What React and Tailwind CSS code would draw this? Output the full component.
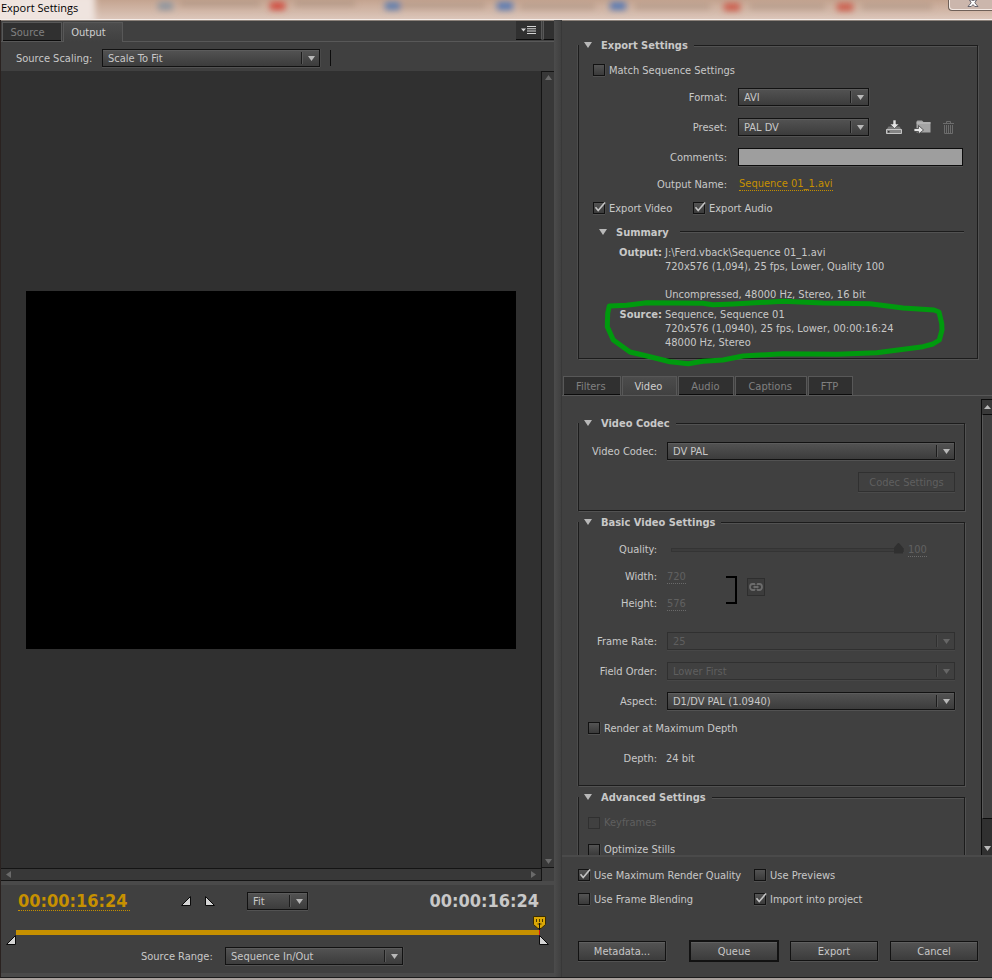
import React, { useState } from "react";
import clsx from "clsx";

/* ---------- small building blocks ---------- */

const Triangle = ({ className, size = "h-[6px] w-2" }) => (
  <svg viewBox="0 0 9 7" preserveAspectRatio="none" className={clsx(size, className)} fill="currentColor" aria-hidden="true">
    <path d="M0 0h9L4.500 7z" />
  </svg>
);

const Select = ({ id, value, options = [], disabled, className, label }) => (
  <div className={clsx("relative h-[18px]", className)}>
    <select
      id={id}
      aria-label={label}
      defaultValue={value}
      disabled={disabled}
      className={clsx(
        "block h-full w-full appearance-none border pl-[5px] pr-5 pt-px text-[11px] leading-4 outline-none",
        disabled
          ? "border-[#303030] bg-[#404040] text-[#5f5f5f] opacity-100 shadow-[0_1px_0_#474747]"
          : "border-[#121212] bg-linear-to-b from-[#535353] to-[#3c3c3c] text-[#c8c8c8] shadow-[0_1px_0_#525252,1px_0_0_#4a4a4a,inset_0_1px_0_#5c5c5c]"
      )}
    >
      {[value, ...options].map((o) => (
        <option key={o}>{o}</option>
      ))}
    </select>
    <span
      className={clsx(
        "pointer-events-none absolute inset-y-[3px] right-[17px] w-[2px] border-l",
        disabled ? "border-[#303030] bg-[#4a4a4a]" : "border-[#1c1c1c] bg-[#595959]"
      )}
    />
    <Triangle
      size="h-[5px] w-[7px]"
      className={clsx(
        "pointer-events-none absolute right-[5px] top-[7px]",
        disabled ? "text-[#666]" : "text-[#b8b8b8]"
      )}
    />
  </div>
);

const Checkbox = ({ label, checked = false, disabled, className }) => (
  <label className={clsx("flex items-center gap-1", disabled ? "text-[#5f5f5f]" : "text-[#c8c8c8]", className)}>
    <span className="relative block size-3">
      <input
        type="checkbox"
        defaultChecked={checked}
        disabled={disabled}
        className={clsx(
          "peer block size-3 appearance-none border",
          disabled
            ? "border-[#303030] bg-[#404040]"
            : "border-[#121212] bg-linear-to-b from-[#545454] to-[#3a3a3a] shadow-[0_1px_0_#505050,1px_0_0_#4a4a4a]"
        )}
      />
      <svg
        viewBox="0 0 12 12"
        className="pointer-events-none absolute inset-0 hidden size-3 overflow-visible peer-checked:block"
        fill="none"
        stroke="#c4c4c4"
        strokeWidth="1.600"
        aria-hidden="true"
      >
        <path d="M2.500 5.200 5.200 8.600 12 0.500" />
      </svg>
    </span>
    {label}
  </label>
);

const Group = ({ title, className, children }) => (
  <fieldset
    className={clsx(
      "min-w-0 border border-[#1c1c1c] shadow-[1px_1px_0_#525252,-1px_0_0_#4c4c4c,inset_0_1px_0_#525252]",
      className
    )}
  >
    <legend className="flex h-4 items-center gap-[9px] bg-[#404040] pl-[5px] pr-[6px] font-bold text-[#c8c8c8]">
      <Triangle className="text-[#b8b8b8]" />
      {title}
    </legend>
    {children}
  </fieldset>
);

const Row = ({ label, htmlFor, labelWidth = "w-[78px]", height = "h-[30px]", gap = "gap-[10px]", children }) => (
  <div className={clsx("flex items-center", gap, height)}>
    <label htmlFor={htmlFor} className={clsx("shrink-0 text-right text-[#c8c8c8]", labelWidth)}>
      {label}
    </label>
    {children}
  </div>
);

const Tabs = ({ items, initial, className, tabClass }) => {
  const [active, setActive] = useState(initial);
  return (
    <div role="tablist" className={clsx("flex items-end gap-px", className)}>
      {items.map((t) => (
        <button
          key={t}
          type="button"
          role="tab"
          aria-selected={t === active}
          onClick={() => setActive(t)}
          className={clsx(
            "border border-b-0 border-[#585858]",
            tabClass,
            t === active
              ? "h-5 bg-linear-to-b from-[#4c4c4c] to-[#404040] pb-px text-[#d0d0d0]"
              : "mb-px h-[19px] bg-[#303030] text-[#808080] shadow-[inset_0_-1px_0_#0c0c0c]"
          )}
        >
          {t}
        </button>
      ))}
    </div>
  );
};

const PushButton = ({ children, className, strong, disabled }) => (
  <button
    type="button"
    disabled={disabled}
    className={clsx(
      "h-5",
      disabled
        ? "border border-[#303030] text-[#5f5f5f] shadow-[0_1px_0_#4a4a4a]"
        : "bg-linear-to-b from-[#545454] to-[#3c3c3c] text-[#c8c8c8]",
      !disabled &&
        (strong
          ? "border border-[#121212] shadow-[inset_0_1px_0_#606060] ring-1 ring-[#121212]"
          : "border border-[#121212] shadow-[0_1px_0_#525252,1px_0_0_#4a4a4a,inset_0_1px_0_#606060]"),
      className
    )}
  >
    {children}
  </button>
);

const HotNumber = ({ id, value, label }) => (
  <input
    id={id}
    aria-label={label}
    defaultValue={value}
    disabled
    className="h-[14px] w-[19px] border-b border-dotted border-[#6a6a6a] bg-transparent p-0 text-[#606060]"
  />
);

/* ---------- window frame ---------- */

const TitleBar = () => (
  <header className="relative flex h-5 shrink-0 overflow-hidden border-b border-[#f4ece8] bg-linear-to-b from-[#c4a490] to-[#dcc6ba]">
    <svg className="absolute inset-0 h-full w-full" aria-hidden="true">
      <defs>
        <filter id="soft" x="-50%" y="-100%" width="200%" height="300%">
          <feGaussianBlur stdDeviation="3" />
        </filter>
      </defs>
      <g filter="url(#soft)">
        <rect x="-10" y="-6" width="105" height="30" fill="#efe4df" />
        <rect x="180" y="1" width="80" height="5" fill="#9c8374" opacity=".5" />
        <rect x="295" y="1" width="60" height="5" fill="#9c8374" opacity=".5" />
        <rect x="400" y="3" width="85" height="5" fill="#9c8374" opacity=".5" />
        <rect x="520" y="4" width="75" height="5" fill="#9c8374" opacity=".5" />
        <rect x="635" y="4" width="75" height="5" fill="#9c8374" opacity=".5" />
        <rect x="750" y="4" width="75" height="5" fill="#9c8374" opacity=".5" />
        <rect x="862" y="4" width="70" height="5" fill="#9c8374" opacity=".5" />
        <rect x="158" y="2" width="15" height="8" fill="#8c949f" />
        <rect x="270" y="2" width="15" height="8" fill="#d24a3c" />
        <rect x="385" y="2" width="15" height="8" fill="#5c7cae" />
        <rect x="497" y="2" width="16" height="8" fill="#5578b4" />
        <rect x="610" y="2" width="16" height="8" fill="#5578b4" />
        <rect x="724" y="3" width="16" height="8" fill="#cc5c4c" />
        <rect x="837" y="3" width="16" height="8" fill="#cc5c4c" />
      </g>
    </svg>
    <h1 className="relative flex-1 pl-px font-['Open_Sans',sans-serif] text-[11px] leading-[15px] text-black">
      Export Settings
    </h1>
    <button
      type="button"
      aria-label="Close"
      className="relative -mt-px flex h-3 w-[44px] items-start rounded-bl-[4px] border border-r-0 border-[#6f6058] bg-[#cbb6ac] pl-[18px] shadow-[inset_1px_-1px_0_#f2e8e3]"
    >
      <svg viewBox="0 0 12 7" className="h-[7px] w-3" aria-hidden="true">
        <path
          d="M2.500 0h2.500l1 .8L7 0h2.500L7.800 2.800 11 6.500H7.800L6 4.600 4.200 6.500H1L4.200 2.800z"
          fill="#fff"
          stroke="#4a4a55"
          strokeWidth=".8"
        />
      </svg>
    </button>
  </header>
);

/* ---------- left side ---------- */

const PreviewPane = () => (
  <div className="flex min-h-0 flex-1 flex-col">
    <div className="flex h-[21px] shrink-0 items-end border-b border-[#585858]">
      <Tabs items={["Source", "Output"]} initial="Output" className="-mb-px flex-1 pl-px" tabClass="w-[60px] pr-[9px]" />
      <button
        type="button"
        aria-label="Panel menu"
        className="flex h-[19px] w-[26px] items-center justify-center self-start border-b border-r border-b-[#0c0c0c] border-r-[#585858] bg-[#303030]"
      >
        <svg viewBox="0 0 15 8" className="h-2 w-[15px]" fill="#d4d4d4" aria-hidden="true">
          <path d="M0 2.500h5L2.500 5.500zM6 0h9v1H6zM6 2.300h9v1H6zM6 4.600h9v1H6zM6 7h9v1H6z" />
        </svg>
      </button>
      <span className="ml-px h-[19px] w-[11px] self-start border-b border-l border-b-[#0c0c0c] border-l-[#585858] bg-[#303030]" />
    </div>

    <div className="flex h-[29px] shrink-0 items-center pl-[15px] pt-[3px]">
      <label htmlFor="scaling" className="w-[86px]">
        Source Scaling:
      </label>
      <Select id="scaling" value="Scale To Fit" options={["Scale To Fill", "Stretch To Fill"]} className="w-[218px]" />
      <span className="ml-[10px] h-4 w-px bg-[#0c0c0c]" />
    </div>

    <div className="flex min-h-0 flex-1 bg-[#303030]">
      <div className="flex flex-1 items-center justify-center">
        <div className="aspect-[490/358] w-[calc(100%-50px)] bg-black" />
      </div>
      <div className="flex w-[13px] flex-col items-center justify-between border border-r-0 border-[#141414] bg-[#383838] py-[3px] text-[#6a6a6a]">
        <Triangle size="h-[5px] w-[7px]" className="rotate-180" />
        <Triangle size="h-[5px] w-[7px]" />
      </div>
    </div>
    <div className="flex h-[13px] shrink-0">
      <div className="flex flex-1 items-center justify-between border border-l-0 border-[#141414] bg-[#383838] px-1 text-[#6a6a6a]">
        <Triangle size="h-[5px] w-[7px]" className="rotate-90" />
        <Triangle size="h-[5px] w-[7px]" className="-rotate-90" />
      </div>
      <div className="w-3 bg-[#404040]" />
    </div>
  </div>
);

const MarkIn = () => (
  <svg viewBox="0 0 10 10" className="size-[10px]" aria-hidden="true">
    <path d="M9.500 0.500v9H0.500z" fill="#d4d4d4" stroke="#0a0a0a" />
  </svg>
);

const MarkOut = () => (
  <svg viewBox="0 0 10 10" className="size-[10px]" aria-hidden="true">
    <path d="M0.500 0.500v9h9z" fill="#d4d4d4" stroke="#0a0a0a" />
  </svg>
);

const Transport = () => (
  <div className="shrink-0 border-t-4 border-[#4a4a4a]">
    <div className="flex h-8 items-center pl-[17px] pr-[15px]">
      <input
        aria-label="Current time"
        defaultValue="00:00:16:24"
        className="h-[19px] w-28 border-b border-dotted border-[#c69000] bg-transparent p-0 text-[18px] font-bold leading-[18px] text-[#c69000] outline-none"
      />
      <button type="button" aria-label="Set in point" className="ml-[51px]">
        <MarkIn />
      </button>
      <button type="button" aria-label="Set out point" className="ml-[14px]">
        <MarkOut />
      </button>
      <Select label="Zoom" value="Fit" options={["50%", "100%"]} className="ml-8 w-[61px]" />
      <output className="ml-auto text-[18px] font-bold leading-[18px] text-[#c8c8c8]">00:00:16:24</output>
    </div>

    <div className="relative ml-[15px] mr-[14px] mt-[13px] h-[5px] bg-[#c69000]">
      <svg viewBox="0 0 13 21" className="absolute -right-[6px] -top-[15px] h-[21px] w-[13px]" aria-hidden="true">
        <path d="M0.500 1.500h12v8L8 13.500H5L0.500 9.500z" fill="#dca806" stroke="#3a2c00" />
        <path d="M3.500 4v3M6.500 4v3M9.500 4v3M4.500 9h4" stroke="#4a3800" />
        <path d="M6.500 8v7" stroke="#111" />
        <path d="M6.500 15v5" stroke="#d81414" />
      </svg>
    </div>
    <div className="flex justify-between px-[5px]">
      <MarkIn />
      <MarkOut />
    </div>

    <div className="flex h-[22px] items-center pl-[140px]">
      <label htmlFor="range" className="w-[84px]">
        Source Range:
      </label>
      <Select id="range" value="Sequence In/Out" options={["Work Area", "Entire Sequence"]} className="w-[178px]" />
    </div>
    <div className="mt-[6px] h-1 bg-[#4a4a4a]" />
  </div>
);

/* ---------- right side ---------- */

const PresetIcons = () => (
  <div className="flex items-center gap-3 pl-[6px]">
    <button type="button" aria-label="Save preset">
      <svg viewBox="0 0 16 14" className="h-[14px] w-4" aria-hidden="true">
        <path d="M2.500 6.500h11l2 3v4H0.500v-4z" fill="#787878" />
        <path d="M0.500 9.500h15v4H0.500z" fill="#858585" stroke="#c4c4c4" />
        <path d="M2 11h1.500v1.500H2z" fill="#303030" />
        <path d="M7 0h3v4h3L8.500 8.500 4 4h3z" fill="#e2e2e2" stroke="#404040" strokeWidth=".6" />
      </svg>
    </button>
    <button type="button" aria-label="Import preset">
      <svg viewBox="0 0 17 14" className="h-[14px] w-[17px]" aria-hidden="true">
        <path d="M2.500 1.500 3.500 0.500h4.500l1.500 1.500H16.500V12.500H2.500z" fill="#a4a4a4" />
        <path d="M2.500 3h14" stroke="#c0c0c0" />
        <path d="M0 8.500h4.500V5.500L9.500 10l-5 4v-2.500H0z" fill="#e6e6e6" stroke="#404040" strokeWidth=".8" />
      </svg>
    </button>
    <button type="button" aria-label="Delete preset" disabled>
      <svg viewBox="0 0 11 13" className="h-[13px] w-[11px]" fill="none" stroke="#6c6c6c" aria-hidden="true">
        <path d="M0 2.500h11M3.500 2V0.500h4V2M1.500 4v8.500h8V4M3.500 4v8M5.500 4v8M7.500 4v8" />
      </svg>
    </button>
  </div>
);

const ExportSettings = () => (
  <Group title="Export Settings" className="ml-4 mr-[14px] mt-4 pb-2">
    <Checkbox label="Match Sequence Settings" className="mt-[7px] h-5 pl-[14px]" />

    <div className="mt-[2px] pr-[14px]">
      <Row label="Format:" htmlFor="format" labelWidth="w-[148px]" gap="gap-[11px]">
        <Select id="format" value="AVI" options={["H.264", "QuickTime"]} className="w-[131px]" />
      </Row>
      <Row label="Preset:" htmlFor="preset" labelWidth="w-[148px]" gap="gap-[11px]">
        <Select id="preset" value="PAL DV" options={["NTSC DV"]} className="w-[131px]" />
        <PresetIcons />
      </Row>
      <Row label="Comments:" htmlFor="comments" labelWidth="w-[148px]" gap="gap-[11px]">
        <input
          id="comments"
          type="text"
          className="h-[18px] min-w-0 flex-1 border border-[#0c0c0c] bg-[#9e9e9e] px-1 text-black shadow-[0_1px_0_#525252] outline-none"
        />
      </Row>
      <div className="flex h-6 items-center gap-3">
        <span className="w-[148px] text-right">Output Name:</span>
        <a href="#output" className="h-[14px] border-b border-dotted border-[#c69000] leading-[14px] text-[#c69000]">
          Sequence 01_1.avi
        </a>
      </div>
    </div>

    <div className="flex h-6 items-center pl-[14px]">
      <Checkbox label="Export Video" checked className="w-[100px]" />
      <Checkbox label="Export Audio" checked />
    </div>

    <div className="flex h-6 items-center pl-5 pr-[13px] font-bold">
      <Triangle className="mr-[9px] text-[#b8b8b8]" />
      <h2>Summary</h2>
      <span className="ml-[11px] h-[2px] flex-1 border-t border-[#1c1c1c] bg-[#525252]" />
    </div>

    <dl className="mt-[2px] leading-[14px]">
      <div className="flex gap-[3px]">
        <dt className="w-[83px] text-right font-bold">Output:</dt>
        <dd>
          J:\Ferd.vback\Sequence 01_1.avi
          <br />
          720x576 (1,094), 25 fps, Lower, Quality 100
          <br />
          <br />
          Uncompressed, 48000 Hz, Stereo, 16 bit
        </dd>
      </div>
      <div className="relative mt-[6px] flex gap-[3px]">
        <dt className="w-[83px] text-right font-bold">Source:</dt>
        <dd>
          Sequence, Sequence 01
          <br />
          720x576 (1,0940), 25 fps, Lower, 00:00:16:24
          <br />
          48000 Hz, Stereo
        </dd>
        {/* marker drawn round the source block */}
        <svg
          viewBox="0 0 345 70"
          className="pointer-events-none absolute -top-[10px] left-[25px] h-[70px] w-[345px]"
          fill="none"
          stroke="#009a0e"
          strokeWidth="5"
          strokeLinecap="round"
          strokeLinejoin="round"
          aria-hidden="true"
        >
          <path d="M5.300 8 22.700 7.300 42.700 4.700 99 5.300 109 6.700 129 6 179 3.300 219 5 266 5.700 299 10 330 12 335 14 337.700 25.300 338 32 335.300 42 329 46 319 48.700 272.700 54.700 232.700 56.300 179 55.700 139 58 119 62 99 63.300 84.300 65.700 66 63.700 46 58.700 26 54 9.300 42 3.300 28.700 3.700 15.300z" />
        </svg>
      </div>
    </dl>
  </Group>
);

const VideoSettings = () => (
  <div className="flex min-h-0 flex-1 overflow-hidden border-t border-[#585858]">
    <div className="min-w-0 flex-1 pl-4 pr-4 pt-[19px]">
      <Group title="Video Codec" className="pb-3">
        <div className="pr-[9px] pt-[5px]">
          <Row label="Video Codec:" htmlFor="codec">
            <Select id="codec" value="DV PAL" options={["DV NTSC"]} className="flex-1" />
          </Row>
          <div className="flex h-8 items-center justify-end">
            <PushButton disabled className="w-[97px]">
              Codec Settings
            </PushButton>
          </div>
        </div>
      </Group>

      <Group title="Basic Video Settings" className="mt-[3px] pb-[15px]">
        <div className="pr-[9px] pt-[6px]">
          <Row label="Quality:" htmlFor="quality" height="h-[27px]">
            <div className="flex flex-1 items-center gap-1 pl-1 pr-7">
              <input
                id="quality"
                type="range"
                defaultValue={100}
                disabled
                className="h-[11px] min-w-0 flex-1 appearance-none bg-transparent [&::-webkit-slider-runnable-track]:h-1 [&::-webkit-slider-runnable-track]:border [&::-webkit-slider-runnable-track]:border-[#343434] [&::-webkit-slider-runnable-track]:bg-[#3c3c3c] [&::-webkit-slider-thumb]:-mt-[6px] [&::-webkit-slider-thumb]:h-[11px] [&::-webkit-slider-thumb]:w-[9px] [&::-webkit-slider-thumb]:appearance-none [&::-webkit-slider-thumb]:bg-[#303030] [&::-webkit-slider-thumb]:[clip-path:polygon(50%_0,100%_45%,100%_100%,0_100%,0_45%)]"
              />
              <HotNumber value="100" label="Quality value" />
            </div>
          </Row>
          <div className="flex">
            <div className="w-[147px]">
              <Row label="Width:" htmlFor="width" height="h-[27px]">
                <HotNumber id="width" value="720" />
              </Row>
              <Row label="Height:" htmlFor="height" height="h-[27px]">
                <HotNumber id="height" value="576" />
              </Row>
            </div>
            <div className="flex items-center gap-[10px]">
              <span className="h-7 w-[11px] border-2 border-l-0 border-black" />
              <button
                type="button"
                aria-label="Link width and height"
                disabled
                className="mb-[6px] flex size-[18px] items-center justify-center border border-[#2e2e2e] bg-[#3c3c3c]"
              >
                <svg viewBox="0 0 14 8" className="h-2 w-[14px] shrink-0" fill="none" stroke="#6c6c6c" strokeWidth="1.800" aria-hidden="true">
                  <path d="M6 2 5.200 1H3.500a2.500 3 0 0 0 0 6H5.200L6 6M8 2l.8-1h1.700a2.500 3 0 0 1 0 6H8.800L8 6M4.500 4h5" />
                </svg>
              </button>
            </div>
          </div>
          <div className="pt-[9px]">
            <Row label="Frame Rate:" htmlFor="rate">
              <Select id="rate" value="25" disabled className="flex-1" />
            </Row>
            <Row label="Field Order:" htmlFor="order">
              <Select id="order" value="Lower First" disabled className="flex-1" />
            </Row>
            <Row label="Aspect:" htmlFor="aspect">
              <Select id="aspect" value="D1/DV PAL (1.0940)" options={["Square Pixels (1.0)"]} className="flex-1" />
            </Row>
          </div>
        </div>
        <Checkbox label="Render at Maximum Depth" className="h-6 pl-[9px]" />
        <div className="mt-[6px] flex h-6 items-center gap-[9px]">
          <span className="w-[78px] text-right">Depth:</span>
          <span>24 bit</span>
        </div>
      </Group>

      <Group title="Advanced Settings" className="mt-[3px] pb-4">
        <div className="pl-[9px] pt-1">
          <Checkbox label="Keyframes" disabled className="h-[27px]" />
          <Checkbox label="Optimize Stills" className="h-[27px]" />
        </div>
      </Group>
    </div>

    {/* scroll bar */}
    <div className="mt-[3px] flex w-[11px] shrink-0 flex-col border-l border-[#0c0c0c] bg-[#303030] text-[#b8b8b8]">
      <div className="flex h-[15px] items-center justify-center border-t border-[#0c0c0c] bg-[#383838]">
        <Triangle size="h-1 w-[7px]" className="rotate-180" />
      </div>
      <div className="flex-1 border-y border-l border-y-[#0c0c0c] border-l-[#585858] bg-[#404040]" />
      <div className="flex h-9 items-end justify-center pb-1">
        <Triangle size="h-[5px] w-[7px]" />
      </div>
    </div>
  </div>
);

const Footer = () => (
  <footer className="shrink-0 border-t-2 border-[#4a4a4a] pl-4 pr-[14px] pt-[6px]">
    <div className="grid grid-cols-[176px_1fr]">
      <Checkbox label="Use Maximum Render Quality" checked className="h-6" />
      <Checkbox label="Use Previews" className="h-6" />
      <Checkbox label="Use Frame Blending" className="h-6" />
      <Checkbox label="Import into project" checked className="h-6" />
    </div>
    <div className="mb-4 mt-[30px] flex gap-3">
      <PushButton className="mr-3 w-[88px]">Metadata...</PushButton>
      <PushButton strong className="w-[88px]">
        Queue
      </PushButton>
      <PushButton className="w-[88px]">Export</PushButton>
      <PushButton className="w-[88px]">Cancel</PushButton>
    </div>
  </footer>
);

export default function App() {
  return (
    <div className="flex h-screen flex-col bg-[#404040] font-['DejaVu_Sans_Condensed','DejaVu_Sans',sans-serif] text-[11px] leading-[15px] text-[#c8c8c8]">
      <TitleBar />
      <main className="flex min-h-0 flex-1 border-l border-[#2a2220]">
        <section className="flex min-w-0 flex-1 flex-col border-t border-[#8a8078]">
          <PreviewPane />
          <Transport />
        </section>
        <div className="w-2 shrink-0 border-r border-[#383838] bg-linear-to-r from-[#4c4c4c] to-[#404040]" />
        <section className="flex w-[430px] shrink-0 flex-col border-t border-[#8a8078]">
          <ExportSettings />
          <Tabs
            items={["Filters", "Video", "Audio", "Captions", "FTP"]}
            initial="Video"
            className="-mb-px mt-[17px] pl-px"
            tabClass="pl-3 pr-[14px]"
          />
          <VideoSettings />
          <Footer />
        </section>
      </main>
      <div className="h-[3px] shrink-0 border-t border-[#1c1c1c] bg-[#a8a09c]" />
    </div>
  );
}
